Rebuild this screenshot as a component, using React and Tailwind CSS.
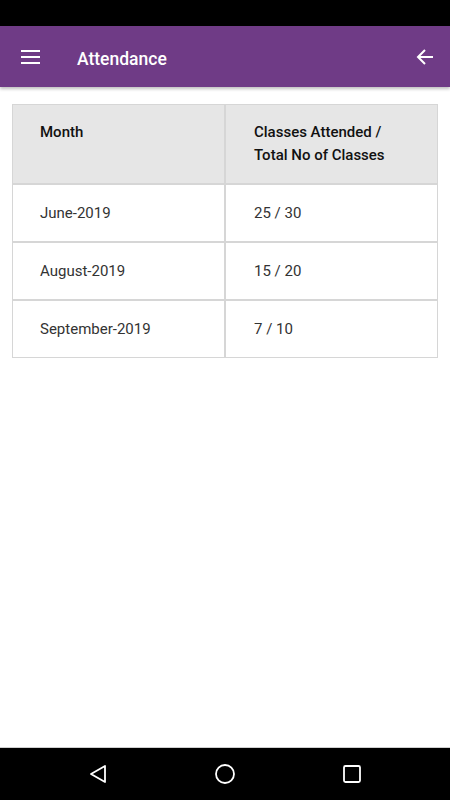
import React from 'react';

const rows = [
  { month: 'June-2019', count: '25 / 30' },
  { month: 'August-2019', count: '15 / 20' },
  { month: 'September-2019', count: '7 / 10' },
];

function MenuIcon() {
  return (
    <svg width="20" height="14" viewBox="0 0 20 14" fill="white">
      <rect x="0" y="0" width="19" height="2" />
      <rect x="0" y="6" width="19" height="2" />
      <rect x="0" y="12" width="19" height="2" />
    </svg>
  );
}

function BackIcon() {
  return (
    <svg width="18" height="18" viewBox="0 0 18 18" fill="none" stroke="white" strokeWidth="2">
      <path d="M17 9H2M9 2L2 9l7 7" />
    </svg>
  );
}

export default function App() {
  return (
    <div
      className="w-[450px] h-[800px] flex flex-col bg-white overflow-hidden"
      style={{ fontFamily: 'Roboto, "Liberation Sans", sans-serif' }}
    >
      {/* Status bar */}
      <div className="h-[26px] bg-black shrink-0" />

      {/* App bar */}
      <header className="h-[61px] bg-[#6f3b86] flex items-center shrink-0 shadow-[0_2px_3px_rgba(0,0,0,0.25)] relative z-10">
        <div className="w-[77px] pl-[21px] flex items-center">
          <MenuIcon />
        </div>
        <h1 className="text-white text-[17.5px] font-medium flex-1 pt-[5px]">Attendance</h1>
        <div className="pr-[16px] flex items-center">
          <BackIcon />
        </div>
      </header>

      {/* Content */}
      <main className="flex-1 px-[12px] pt-[17px]">
        <div className="grid grid-cols-2 text-[15px]">
          <div className="h-[80px] bg-[#e6e6e6] border border-[#d6d6d6] pl-[27px] pt-[16px] font-medium text-[15px] text-[#111] leading-[23px]">
            Month
          </div>
          <div className="h-[80px] bg-[#e6e6e6] border border-[#d6d6d6] pl-[28px] pt-[16px] font-medium text-[15px] text-[#111] leading-[23px]">
            Classes Attended /<br />Total No of Classes
          </div>
          {rows.map((r) => (
            <React.Fragment key={r.month}>
              <div className="h-[58px] border border-[#d6d6d6] pl-[27px] flex items-center text-[#333]">
                {r.month}
              </div>
              <div className="h-[58px] border border-[#d6d6d6] pl-[28px] flex items-center text-[#333]">
                {r.count}
              </div>
            </React.Fragment>
          ))}
        </div>
      </main>

      {/* Nav bar */}
      <footer className="h-[53px] bg-black border-t border-[#cfcfcf] flex items-center justify-center gap-[106px] shrink-0">
        <svg width="20" height="20" viewBox="0 0 20 20" fill="none" stroke="white" strokeWidth="1.8" strokeLinejoin="round">
          <path d="M17 2L3 10l14 8z" />
        </svg>
        <svg width="22" height="22" viewBox="0 0 22 22" fill="none" stroke="white" strokeWidth="1.8">
          <circle cx="11" cy="11" r="9" />
        </svg>
        <svg width="20" height="20" viewBox="0 0 20 20" fill="none" stroke="white" strokeWidth="1.8">
          <rect x="2" y="2" width="16" height="16" rx="1.5" />
        </svg>
      </footer>
    </div>
  );
}
